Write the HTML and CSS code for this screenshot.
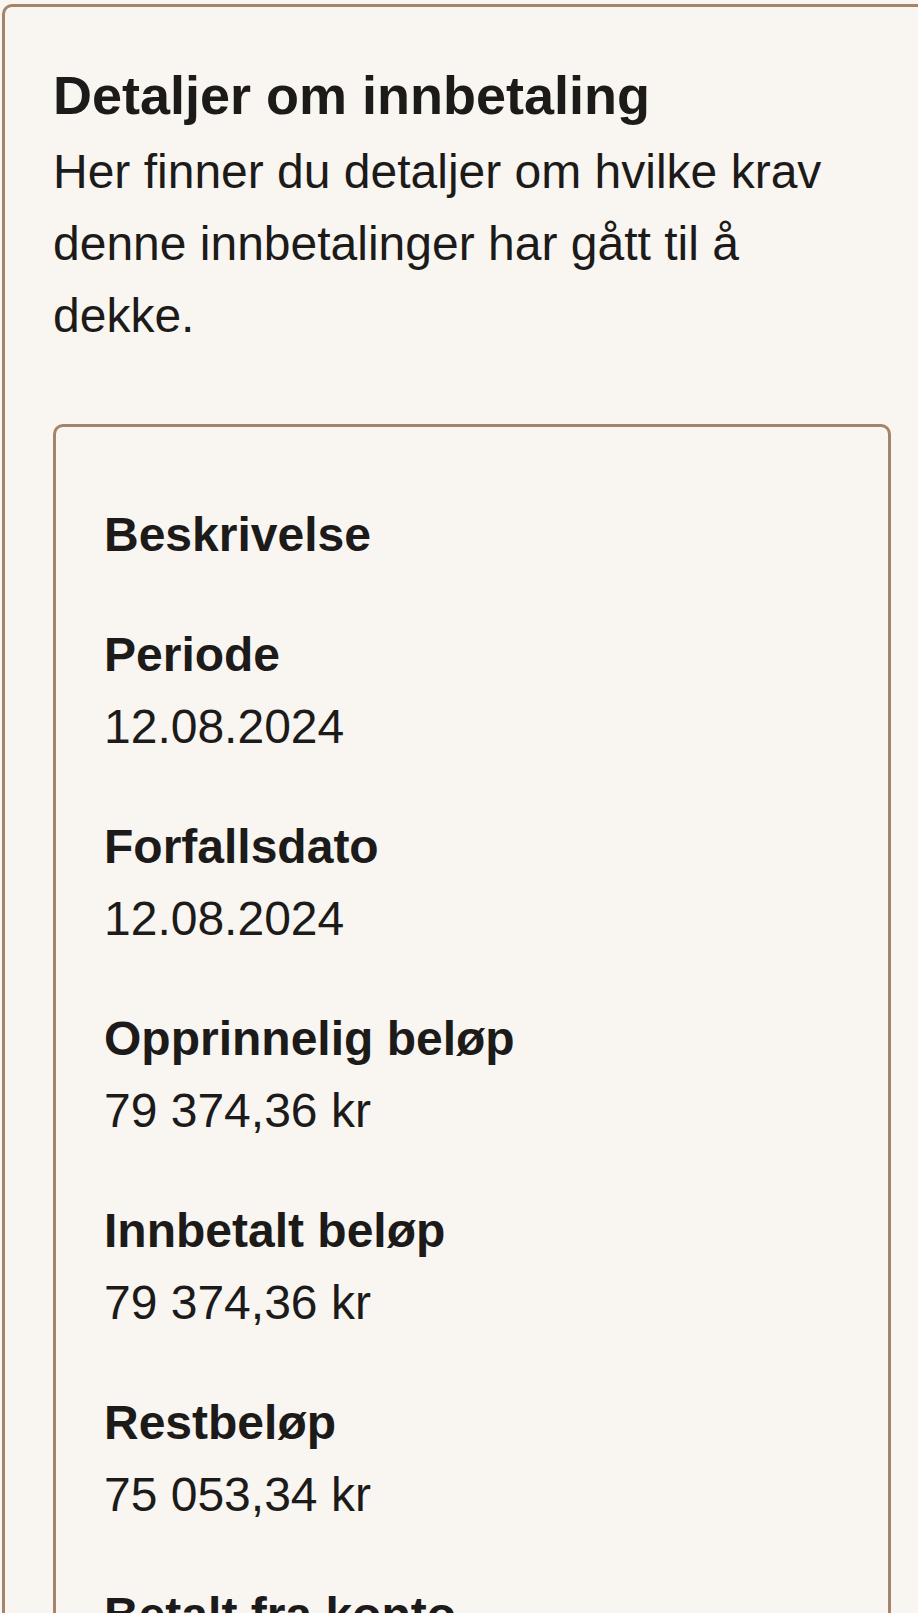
FILE: index.html
```html
<!DOCTYPE html>
<html lang="no">
<head>
<meta charset="utf-8">
<title>Detaljer om innbetaling</title>
<link rel="stylesheet" href="styles.css">
</head>
<body>
<section class="panel">
  <h2 class="panel-title">Detaljer om innbetaling</h2>
  <p class="panel-intro">Her finner du detaljer om hvilke krav denne innbetalinger har gått til å dekke.</p>
  <div class="claim">
    <dl class="claim-list">
      <div class="claim-item">
        <dt>Beskrivelse</dt>
        <dd></dd>
      </div>
      <div class="claim-item">
        <dt>Periode</dt>
        <dd>12.08.2024</dd>
      </div>
      <div class="claim-item">
        <dt>Forfallsdato</dt>
        <dd>12.08.2024</dd>
      </div>
      <div class="claim-item">
        <dt>Opprinnelig beløp</dt>
        <dd>79 374,36 kr</dd>
      </div>
      <div class="claim-item">
        <dt>Innbetalt beløp</dt>
        <dd>79 374,36 kr</dd>
      </div>
      <div class="claim-item">
        <dt>Restbeløp</dt>
        <dd>75 053,34 kr</dd>
      </div>
      <div class="claim-item">
        <dt>Betalt fra konto</dt>
        <dd></dd>
      </div>
    </dl>
  </div>
</section>
</body>
</html>
```

FILE: styles.css
```css
html, body {
  margin: 0;
  padding: 0;
  background: #f9f5f1;
  overflow: hidden;
}

body {
  font-family: "Liberation Sans", Arial, Helvetica, sans-serif;
  color: #1c1b1a;
}

.panel {
  box-sizing: border-box;
  width: 940px;
  margin: 4px 0 0 2px;
  padding: 48px;
  background: #f9f5f1;
  border: 3px solid #a5856a;
  border-radius: 10px;
}

.panel-title {
  margin: 0;
  font-size: 54px;
  font-weight: 700;
  line-height: 81px;
}

.panel-intro {
  margin: 0;
  font-size: 48px;
  line-height: 72px;
}

.claim {
  margin-top: 72px;
  padding: 72px 48px 48px;
  border: 3px solid #a5856a;
  border-radius: 10px;
}

.claim-list {
  margin: 0;
  display: flex;
  flex-direction: column;
  gap: 48px;
}

.claim-item dt {
  font-size: 48px;
  font-weight: 700;
  line-height: 72px;
}

.claim-item dd {
  margin: 0;
  font-size: 48px;
  line-height: 72px;
}
```
